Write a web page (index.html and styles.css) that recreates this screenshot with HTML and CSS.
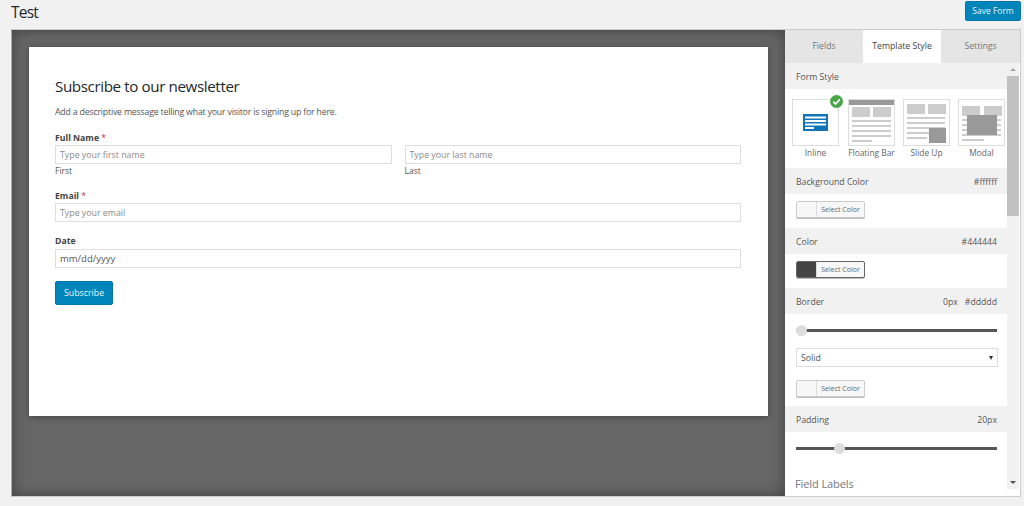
FILE: index.html
```html
<!DOCTYPE html>
<html lang="en">
<head>
<meta charset="utf-8">
<title>Test</title>
<link rel="stylesheet" href="styles.css">
</head>
<body>
<header class="topbar">
  <h1 class="page-title">Test</h1>
  <button class="save-btn">Save Form</button>
</header>
<main class="builder">
  <section class="canvas">
    <div class="card">
      <h2 class="form-title">Subscribe to our newsletter</h2>
      <p class="form-desc">Add a descriptive message telling what your visitor is signing up for here.</p>
      <div class="field field-name">
        <div class="label">Full Name <span class="req">*</span></div>
        <div class="name-row">
          <div class="name-col"><div class="input ph">Type your first name</div><div class="sub">First</div></div>
          <div class="name-col"><div class="input ph">Type your last name</div><div class="sub">Last</div></div>
        </div>
      </div>
      <div class="field field-email">
        <div class="label">Email <span class="req">*</span></div>
        <div class="input ph">Type your email</div>
      </div>
      <div class="field field-date">
        <div class="label">Date</div>
        <div class="input date">mm/dd/yyyy</div>
      </div>
      <button class="subscribe">Subscribe</button>
    </div>
  </section>
  <aside class="sidebar">
    <nav class="tabs">
      <div class="tab tab-first">Fields</div>
      <div class="tab active">Template Style</div>
      <div class="tab">Settings</div>
    </nav>
    <div class="panel">
      <div class="scroll">
        <div class="head"><span>Form Style</span></div>
        <div class="styles">
          <div class="style">
            <div class="thumb">
              <svg width="45" height="45" viewBox="0 0 45 45">
                <rect x="10" y="14" width="25" height="17" fill="#0f75b5"/>
                <rect x="12" y="16.500" width="21" height="2" fill="#fff"/>
                <rect x="12" y="20" width="21" height="2" fill="#fff"/>
                <rect x="12" y="23.500" width="21" height="2" fill="#fff"/>
                <rect x="12" y="27" width="9" height="2" fill="#fff"/>
              </svg>
              <svg class="check" width="13" height="13" viewBox="0 0 13 13">
                <circle cx="6.500" cy="6.500" r="6.500" fill="#46a546"/>
                <path d="M3.200 6.700 5.500 9 9.800 4.400" fill="none" stroke="#fff" stroke-width="1.800"/>
              </svg>
            </div>
            <div class="style-name">Inline</div>
          </div>
          <div class="style">
            <div class="thumb">
              <svg width="45" height="45" viewBox="0 0 45 45">
                <rect x="0" y="0" width="47" height="5" fill="#999"/>
                <rect x="3" y="7" width="18" height="10" fill="#ccc"/>
                <rect x="24" y="7" width="18" height="10" fill="#ccc"/>
                <rect x="3" y="20" width="39" height="2" fill="#ccc"/>
                <rect x="3" y="25" width="39" height="2" fill="#ccc"/>
                <rect x="3" y="30" width="39" height="2" fill="#ccc"/>
                <rect x="3" y="35" width="39" height="2" fill="#ccc"/>
                <rect x="3" y="40" width="20" height="2" fill="#ccc"/>
              </svg>
            </div>
            <div class="style-name">Floating Bar</div>
          </div>
          <div class="style">
            <div class="thumb">
              <svg width="45" height="45" viewBox="0 0 45 45">
                <rect x="3" y="4" width="18" height="10" fill="#ccc"/>
                <rect x="24" y="4" width="18" height="10" fill="#ccc"/>
                <rect x="3" y="17" width="38" height="2" fill="#ccc"/>
                <rect x="3" y="22" width="38" height="2" fill="#ccc"/>
                <rect x="3" y="27" width="38" height="2" fill="#ccc"/>
                <rect x="3" y="32" width="38" height="2" fill="#ccc"/>
                <rect x="3" y="37" width="20" height="2" fill="#ccc"/>
                <rect x="25" y="28" width="17" height="15" fill="#999"/>
              </svg>
            </div>
            <div class="style-name">Slide Up</div>
          </div>
          <div class="style">
            <div class="thumb">
              <svg width="45" height="45" viewBox="0 0 45 45">
                <rect x="3" y="6" width="18" height="10" fill="#ccc"/>
                <rect x="25" y="6" width="18" height="10" fill="#ccc"/>
                <rect x="3" y="19" width="39" height="2" fill="#ccc"/>
                <rect x="3" y="24" width="39" height="2" fill="#ccc"/>
                <rect x="3" y="29" width="39" height="2" fill="#ccc"/>
                <rect x="3" y="34" width="39" height="2" fill="#ccc"/>
                <rect x="3" y="39" width="22" height="2" fill="#ccc"/>
                <rect x="8" y="15" width="30" height="20" fill="#999"/>
              </svg>
            </div>
            <div class="style-name">Modal</div>
          </div>
        </div>
        <div class="head"><span>Background Color</span><span>#ffffff</span></div>
        <div class="body">
          <div class="color-btn"><span class="swatch"></span><span class="color-text">Select Color</span></div>
        </div>
        <div class="head"><span>Color</span><span>#444444</span></div>
        <div class="body">
          <div class="color-btn focus"><span class="swatch dark"></span><span class="color-text">Select Color</span></div>
        </div>
        <div class="head"><span>Border</span><span class="vals"><span>0px</span><span>#ddddd</span></span></div>
        <div class="body body-border">
          <div class="slider"><span class="knob knob-0"></span></div>
          <div class="select"><span>Solid</span><span class="caret"></span></div>
          <div class="color-btn"><span class="swatch"></span><span class="color-text">Select Color</span></div>
        </div>
        <div class="head"><span>Padding</span><span>20px</span></div>
        <div class="body body-padding">
          <div class="slider"><span class="knob knob-20"></span></div>
        </div>
        <div class="group-title">Field Labels</div>
      </div>
      <div class="scrollbar">
        <div class="arrow up"></div>
        <div class="track"><div class="bar"></div></div>
        <div class="arrow down"></div>
      </div>
    </div>
  </aside>
</main>
</body>
</html>
```
FILE: styles.css
```css
* { box-sizing: border-box; }
html, body { height: 100%; }
body {
  margin: 0;
  height: 506px;
  overflow: hidden;
  background: #f1f1f1;
  color: #444;
  font-family: "Open Sans", "Noto Sans", sans-serif;
  font-size: 9px;
}
.topbar {
  height: 29px;
  display: flex;
  justify-content: space-between;
  align-items: flex-start;
  padding: 1px 3px 0 11px;
}
.page-title {
  margin: 0;
  font-size: 15.500px;
  letter-spacing: -0.8px;
  line-height: 22px;
  font-weight: 400;
  color: #23282d;
}
.save-btn {
  width: 56px;
  height: 20px;
  padding: 0;
  background: #0085ba;
  border: 1px solid #0079aa;
  border-radius: 2px;
  color: #e8f4fa;
  font: 8.500px/18px "Open Sans", sans-serif;
}
.builder {
  display: flex;
  margin: 0 3px 0 11px;
  height: 468px;
  border: 1px solid #ccc;
  border-left-color: #aaa;
}
.canvas {
  width: 773px;
  flex: none;
  background: #666;
  box-shadow: inset 0 0 14px rgba(0,0,0,.38);
  padding: 17px 17px 0;
}
.card {
  width: 739px;
  height: 369px;
  background: #fff;
  padding: 29px 27px 0 26px;
  box-shadow: 0 1px 6px rgba(0,0,0,.35);
}
.form-title {
  margin: 0;
  font-size: 15.200px;
  letter-spacing: -0.4px;
  line-height: 20px;
  font-weight: 500;
  color: #23282d;
}
.form-desc {
  margin: 10px 0 0;
  font-size: 8.800px;
  letter-spacing: -0.21px;
  line-height: 12px;
  color: #555;
}
.label {
  font-size: 8.700px;
  line-height: 12px;
  font-weight: 700;
  color: #444;
}
.req { color: #c9353a; font-weight: 400; }
.field-name { margin-top: 14px; }
.field-email { margin-top: 13px; }
.field-date { margin-top: 13px; }
.name-row { display: flex; gap: 13px; }
.name-col { flex: 1; }
.input {
  height: 19px;
  margin-top: 1px;
  padding-left: 4px;
  background: #fff;
  border: 1px solid #ddd;
  font-size: 8.800px;
  line-height: 18px;
}
.ph { color: #8a8a8a; }
.date { margin-top: 2px; color: #555; font-size: 9.500px; }
.sub { font-size: 8.500px; line-height: 12px; margin-top: 1px; color: #555; }
.subscribe {
  display: block;
  width: 58px;
  height: 24px;
  margin-top: 13px;
  padding: 0;
  background: #0085ba;
  border: 1px solid #0079aa;
  border-radius: 2px;
  color: #e8f4fa;
  font: 8.800px/22px "Open Sans", sans-serif;
}
.sidebar {
  width: 235px;
  flex: none;
  display: flex;
  flex-direction: column;
  background: #fff;
}
.tabs { display: flex; height: 33px; flex: none; background: #e5e5e5; }
.tab {
  flex: 1;
  text-align: center;
  font-size: 8.700px;
  line-height: 33px;
  font-weight: 500;
  color: #777;
}
.tab-first { flex: none; width: 78px; }
.tab.active { background: #fff; color: #444; flex: none; width: 78px; }
.panel { flex: 1; min-height: 0; display: flex; }
.scroll { flex: 1; min-width: 0; overflow: hidden; }
.head {
  height: 26px;
  display: flex;
  justify-content: space-between;
  align-items: center;
  padding: 2px 10px 0 11px;
  background: #f1f1f1;
  font-size: 8.700px;
  font-weight: 500;
  color: #555;
}
.vals { display: flex; gap: 7px; }
.styles {
  height: 79px;
  display: flex;
  gap: 8px;
  padding: 10px 0 0 7px;
}
.style { width: 47px; flex: none; text-align: center; }
.style:first-child { margin-right: 1px; }
.thumb {
  position: relative;
  width: 47px;
  height: 47px;
  background: #fff;
  border: 1px solid #ddd;
}
.thumb svg { display: block; overflow: hidden; }
.thumb .check { position: absolute; top: -5px; right: -5px; }
.style-name { margin-top: 1px; font-size: 8.400px; line-height: 12px; white-space: nowrap; color: #666; }
.body { height: 34px; padding: 7px 10px 0 11px; }
.color-btn {
  display: flex;
  width: 69px;
  height: 17px;
  background: #f7f7f7;
  border: 1px solid #ccc;
  border-radius: 2px;
  box-shadow: 0 1px 0 #bbb;
  overflow: hidden;
}
.color-btn.focus { border-color: #666; }
.swatch { width: 20px; flex: none; background: #f7f7f7; border-right: 1px solid #ddd; }
.swatch.dark { background: #444; }
.color-text { flex: 1; text-align: center; font-size: 7px; line-height: 15px; color: #666; }
.body-border { height: 92px; padding-top: 15px; }
.slider { position: relative; height: 3px; background: #555; }
.knob {
  position: absolute;
  top: -4px;
  width: 11px;
  height: 11px;
  border-radius: 50%;
  background: #ddd;
}
.knob-0 { left: 0; }
.knob-20 { left: 38px; }
.select {
  display: flex;
  justify-content: space-between;
  align-items: center;
  height: 19px;
  margin: 16px -1px 0 0;
  padding: 0 4px 0 4px;
  border: 1px solid #ddd;
  font-size: 8.800px;
  color: #555;
}
.caret { border: 2.500px solid transparent; border-top: 4px solid #333; border-bottom: 0; }
.body-border .color-btn { margin-top: 13px; }
.body-padding { height: 35px; padding-top: 15px; }
.group-title { margin-top: 9px; padding-left: 10px; font-size: 11px; line-height: 16px; letter-spacing: -0.1px; color: #72777c; }
.scrollbar {
  width: 12px;
  margin-right: 1px;
  flex: none;
  display: flex;
  flex-direction: column;
  align-items: center;
  background: #f1f1f1;
  height: 426px;
}
.arrow { height: 13px; width: 12px; flex: none; display: flex; align-items: center; justify-content: center; }
.arrow::before { content: ""; border: 3px solid transparent; }
.arrow.up::before { border-bottom: 3px solid #a3a3a3; border-top: 0; }
.arrow.down::before { border-top: 3px solid #505050; border-bottom: 0; }
.track { flex: 1; width: 100%; }
.bar { height: 140px; background: #c1c1c1; width: 100%; }
```
